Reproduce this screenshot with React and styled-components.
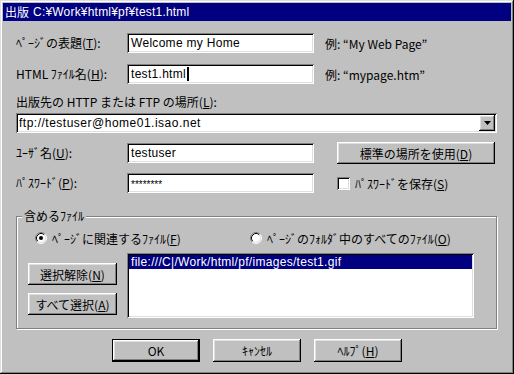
import React from "react";
import styled, { createGlobalStyle } from "styled-components";

const GlobalStyle = createGlobalStyle`
  html, body { margin: 0; padding: 0; background: #c0c0c0; }
  body { font-family: "Noto Sans CJK JP", sans-serif; font-size: 12px; color: #000; }
  * { box-sizing: border-box; }
`;

const raised = `
  box-shadow: inset -1px -1px 0 #000, inset 1px 1px 0 #fff,
    inset -2px -2px 0 #808080, inset 2px 2px 0 #dfdfdf;
`;
const sunken = `
  box-shadow: inset 1px 1px 0 #808080, inset -1px -1px 0 #fff,
    inset 2px 2px 0 #000, inset -2px -2px 0 #dfdfdf;
`;

const Window = styled.div`
  width: 514px;
  height: 374px;
  background: #c0c0c0;
  padding: 3px;
  display: flex;
  flex-direction: column;
  box-shadow: inset -1px -1px 0 #000, inset 1px 1px 0 #dfdfdf,
    inset -2px -2px 0 #808080, inset 2px 2px 0 #fff;
`;

const TitleBar = styled.div`
  height: 18px;
  background: #000080;
  color: #fff;
  padding-left: 2px;
  display: flex;
  align-items: center;
  gap: 4px;
  font-size: 12px;
  line-height: 1;
  white-space: nowrap;
`;

const TitlePath = styled.span`
  font-family: "Liberation Sans", "Noto Sans CJK JP", sans-serif;
  font-size: 12px;
  letter-spacing: 0.2px;
`;

const Body = styled.div`
  padding: 12px 14px 0 13px;
  display: flex;
  flex-direction: column;
`;

const FieldRow = styled.div`
  display: grid;
  grid-template-columns: 111px 187px 1fr;
  align-items: center;
  height: ${(p) => p.$h || 20}px;
  margin-top: ${(p) => p.$mt || 0}px;
`;

const Label = styled.div`
  white-space: nowrap;
  line-height: 14px;
`;

const TextField = styled.div`
  height: 20px;
  background: #fff;
  ${sunken}
  padding: 0 4px;
  display: flex;
  align-items: center;
  font-family: "Liberation Sans", "Noto Sans CJK JP", sans-serif;
  font-size: 12px;
  letter-spacing: 0.3px;
  white-space: nowrap;
`;

const Caret = styled.span`
  display: inline-block;
  width: 2px;
  height: 14px;
  background: #000;
  margin-left: 1px;
`;

const Stars = styled.span`
  font-size: 10px;
  letter-spacing: 0;
  padding-top: 2px;
`;

const Note = styled.div`
  margin-left: ${(p) => p.$indent || 11}px;
  white-space: nowrap;
`;

const Combo = styled.div`
  margin-top: 2px;
  height: 20px;
  background: #fff;
  ${sunken}
  display: flex;
  align-items: center;
  justify-content: space-between;
  padding: 2px 2px 2px 3px;
  font-family: "Liberation Sans", "Noto Sans CJK JP", sans-serif;
  font-size: 12px;
  letter-spacing: 0.5px;
`;

const DropButton = styled.div`
  width: 16px;
  height: 16px;
  background: #c0c0c0;
  ${raised}
  display: flex;
  align-items: center;
  justify-content: center;
`;

const Button = styled.div`
  width: ${(p) => p.$w || 88}px;
  height: ${(p) => p.$h || 22}px;
  background: #c0c0c0;
  display: flex;
  align-items: center;
  justify-content: center;
  white-space: nowrap;
  ${raised}
  ${(p) =>
    p.$default &&
    `
    box-shadow: inset 0 0 0 1px #000, inset -2px -2px 0 #000, inset 2px 2px 0 #fff,
      inset -3px -3px 0 #808080, inset 3px 3px 0 #dfdfdf;
  `}
`;

const CheckRow = styled.div`
  margin-left: 23px;
  display: flex;
  align-items: center;
  gap: 5px;
  white-space: nowrap;
`;

const CheckBox = styled.div`
  width: 13px;
  height: 13px;
  background: #fff;
  ${sunken}
`;

const Group = styled.div`
  position: relative;
  margin-top: 23px;
  height: 113px;
  border: 1px solid #808080;
  box-shadow: 1px 1px 0 #fff, inset 1px 1px 0 #fff;
  display: flex;
  flex-direction: column;
`;

const Legend = styled.div`
  position: absolute;
  top: -8px;
  left: 5px;
  padding: 0 2px;
  background: #c0c0c0;
  line-height: 14px;
  white-space: nowrap;
`;

const RadioRow = styled.div`
  margin-top: 13px;
  height: 16px;
  padding-left: 18px;
  display: flex;
  align-items: center;
`;

const RadioItem = styled.div`
  width: ${(p) => p.$w || "auto"};
  display: flex;
  align-items: center;
  gap: 5px;
  white-space: nowrap;
`;

const Lower = styled.div`
  margin-top: 7px;
  padding-left: 11px;
  display: flex;
  gap: 10px;
`;

const ButtonCol = styled.div`
  padding-top: 10px;
  display: flex;
  flex-direction: column;
  gap: 8px;
`;

const ListBox = styled.div`
  width: 347px;
  height: 65px;
  background: #fff;
  ${sunken}
  padding: 2px;
  font-family: "Liberation Sans", "Noto Sans CJK JP", sans-serif;
  font-size: 12px;
  letter-spacing: 0.3px;
`;

const ListItem = styled.div`
  height: 14px;
  line-height: 14px;
  padding-left: 2px;
  background: ${(p) => (p.$selected ? "#000080" : "transparent")};
  color: ${(p) => (p.$selected ? "#fff" : "#000")};
  white-space: nowrap;
`;

const Footer = styled.div`
  margin-top: 10px;
  padding-left: 96px;
  display: flex;
  gap: 13px;
`;

const Radio = ({ checked }) => (
  <svg width="12" height="12" viewBox="0 0 12 12">
    <circle cx="6" cy="6" r="5" fill="#fff" />
    <path d="M2.11 9.89A5.5 5.5 0 0 1 9.89 2.11" stroke="#808080" fill="none" />
    <path d="M9.89 2.11A5.5 5.5 0 0 1 2.11 9.89" stroke="#fff" fill="none" />
    <path d="M2.82 9.18A4.5 4.5 0 0 1 9.18 2.82" stroke="#000" fill="none" />
    <path d="M9.18 2.82A4.5 4.5 0 0 1 2.82 9.18" stroke="#dfdfdf" fill="none" />
    {checked && <circle cx="6" cy="6" r="2" fill="#000" />}
  </svg>
);

const Arrow = () => (
  <svg width="7" height="4" viewBox="0 0 7 4">
    <path d="M0 0h7L3.5 4z" fill="#000" />
  </svg>
);

export default function App() {
  return (
    <>
      <GlobalStyle />
      <Window>
        <TitleBar>
          <span>出版</span>
          <TitlePath>C:¥Work¥html¥pf¥test1.html</TitlePath>
        </TitleBar>
        <Body>
          <FieldRow>
            <Label>
              ﾍﾟｰｼﾞの表題(<u>T</u>):
            </Label>
            <TextField>Welcome my Home</TextField>
            <Note>例: “My Web Page”</Note>
          </FieldRow>
          <FieldRow $mt={11}>
            <Label>
              HTML ﾌｧｲﾙ名(<u>H</u>):
            </Label>
            <TextField>
              test1.html
              <Caret />
            </TextField>
            <Note>例: “mypage.htm”</Note>
          </FieldRow>
          <FieldRow $mt={9} $h={18}>
            <Label>
              出版先の HTTP または FTP の場所(<u>L</u>):
            </Label>
          </FieldRow>
          <Combo>
            <span>ftp://testuser@home01.isao.net</span>
            <DropButton>
              <Arrow />
            </DropButton>
          </Combo>
          <FieldRow $mt={9} $h={22}>
            <Label>
              ﾕｰｻﾞ名(<u>U</u>):
            </Label>
            <TextField>testuser</TextField>
            <Note $indent={23}>
              <Button $w={158}>
                標準の場所を使用(<u>D</u>)
              </Button>
            </Note>
          </FieldRow>
          <FieldRow $mt={9}>
            <Label>
              ﾊﾟｽﾜｰﾄﾞ(<u>P</u>):
            </Label>
            <TextField>
              <Stars>********</Stars>
            </TextField>
            <CheckRow>
              <CheckBox />
              <span>
                ﾊﾟｽﾜｰﾄﾞを保存(<u>S</u>)
              </span>
            </CheckRow>
          </FieldRow>
          <Group>
            <Legend>含めるﾌｧｲﾙ</Legend>
            <RadioRow>
              <RadioItem $w="215px">
                <Radio checked />
                <span>
                  ﾍﾟｰｼﾞに関連するﾌｧｲﾙ(<u>F</u>)
                </span>
              </RadioItem>
              <RadioItem>
                <Radio />
                <span>
                  ﾍﾟｰｼﾞのﾌｫﾙﾀﾞ中のすべてのﾌｧｲﾙ(<u>O</u>)
                </span>
              </RadioItem>
            </RadioRow>
            <Lower>
              <ButtonCol>
                <Button $w={89}>
                  選択解除(<u>N</u>)
                </Button>
                <Button $w={89}>
                  すべて選択(<u>A</u>)
                </Button>
              </ButtonCol>
              <ListBox>
                <ListItem $selected>file:///C|/Work/html/pf/images/test1.gif</ListItem>
              </ListBox>
            </Lower>
          </Group>
          <Footer>
            <Button $default $h={23}>
              OK
            </Button>
            <Button $h={23}>ｷｬﾝｾﾙ</Button>
            <Button $h={23}>
              ﾍﾙﾌﾟ(<u>H</u>)
            </Button>
          </Footer>
        </Body>
      </Window>
    </>
  );
}
